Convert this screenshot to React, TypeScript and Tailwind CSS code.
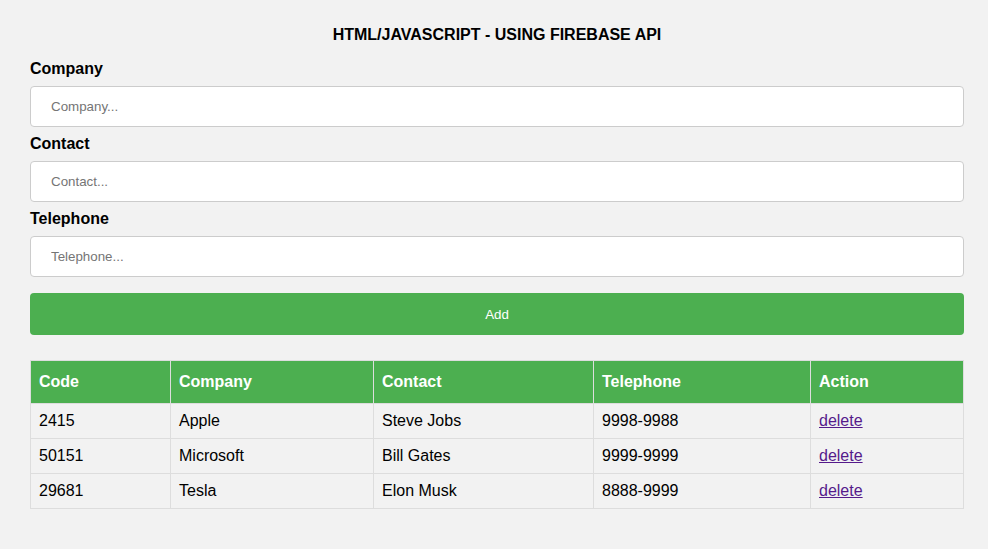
import React from "react";

const rows = [
  { code: "2415", company: "Apple", contact: "Steve Jobs", telephone: "9998-9988" },
  { code: "50151", company: "Microsoft", contact: "Bill Gates", telephone: "9999-9999" },
  { code: "29681", company: "Tesla", contact: "Elon Musk", telephone: "8888-9999" },
];

const fields = [
  { label: "Company", placeholder: "Company..." },
  { label: "Contact", placeholder: "Contact..." },
  { label: "Telephone", placeholder: "Telephone..." },
];

export default function App() {
  return (
    <div
      className="min-h-[549px] bg-[#f2f2f2] text-black"
      style={{ fontFamily: '"Liberation Sans", Arial, sans-serif' }}
    >
      <div className="ml-[30px] w-[934px] pt-[26px]">
        <h3 className="text-center text-[16px] leading-[18px] font-bold">
          HTML/JAVASCRIPT - USING FIREBASE API
        </h3>

        {/* Form */}
        <div className="mt-[16px]">
          {fields.map((f) => (
            <div key={f.label}>
              <label className="block text-[16px] leading-[18px] font-bold">
                {f.label}
              </label>
              <input
                placeholder={f.placeholder}
                className="mt-[8px] mb-[8px] block w-full h-[41px] rounded-[4px] border border-[#ccc] bg-white px-[20px] text-[13.33px] placeholder:text-[#757575] outline-none"
              />
            </div>
          ))}
          <button className="mt-[16px] block w-full h-[42px] pt-[2px] rounded-[4px] bg-[#4CAF50] text-white text-[13.33px]">
            Add
          </button>
        </div>

        {/* Table */}
        <table className="mt-[25px] w-[933px] border-collapse text-[16px] leading-[18px] table-fixed">
          <colgroup>
            <col className="w-[140px]" />
            <col className="w-[203px]" />
            <col className="w-[220px]" />
            <col className="w-[217px]" />
            <col className="w-[153px]" />
          </colgroup>
          <thead>
            <tr className="bg-[#4CAF50] text-white">
              {["Code", "Company", "Contact", "Telephone", "Action"].map((h) => (
                <th key={h} className="border border-[#ddd] px-[8px] py-[12px] text-left font-bold">
                  {h}
                </th>
              ))}
            </tr>
          </thead>
          <tbody>
            {rows.map((r) => (
              <tr key={r.code}>
                <td className="border border-[#ddd] p-[8px]">{r.code}</td>
                <td className="border border-[#ddd] p-[8px]">{r.company}</td>
                <td className="border border-[#ddd] p-[8px]">{r.contact}</td>
                <td className="border border-[#ddd] p-[8px]">{r.telephone}</td>
                <td className="border border-[#ddd] p-[8px]">
                  <a href="#" className="text-[#551A8B] underline">
                    delete
                  </a>
                </td>
              </tr>
            ))}
          </tbody>
        </table>
      </div>
    </div>
  );
}
